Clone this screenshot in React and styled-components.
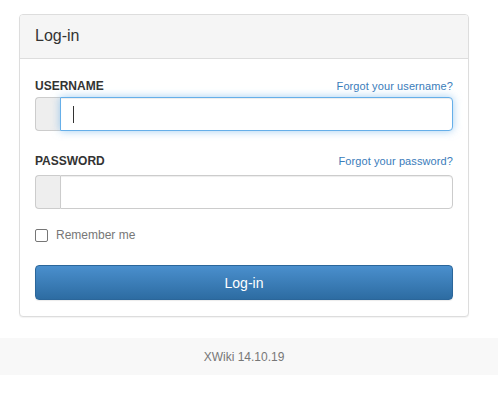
import styled, { createGlobalStyle } from 'styled-components';

const GlobalStyle = createGlobalStyle`
  html, body {
    margin: 0;
    padding: 0;
    background: #fff;
    font-family: "Liberation Sans", Arial, sans-serif;
    color: #333;
  }
`;

const Page = styled.div`
  padding-top: 14px;
`;

const Main = styled.div`
  padding: 0 29px 21px 19px;
`;

const Panel = styled.div`
  border: 1px solid #ddd;
  border-radius: 4px;
  background: #fff;
  box-shadow: 0 1px 1px rgba(0, 0, 0, 0.05);
`;

const PanelHeading = styled.div`
  background: #f5f5f5;
  border-bottom: 1px solid #ddd;
  border-radius: 3px 3px 0 0;
  padding: 9px 15px 11px;
  height: 23px;
`;

const PanelTitle = styled.h2`
  margin: 0;
  font-size: 16px;
  line-height: 23px;
  font-weight: 400;
  color: #333;
`;

const PanelBody = styled.div`
  padding: 19px 15px 16px 15px;
`;

const FieldGroup = styled.div`
  margin-bottom: ${p => p.$gap}px;
`;

const LabelRow = styled.div`
  display: flex;
  justify-content: space-between;
  align-items: baseline;
  margin-bottom: ${p => p.$gap}px;
`;

const Label = styled.label`
  font-size: 12px;
  line-height: 17px;
  font-weight: 700;
  text-transform: uppercase;
  color: #333;
`;

const HelpLink = styled.a`
  font-size: 11px;
  letter-spacing: 0.1px;
  color: #3a7cba;
  text-decoration: none;
`;

const InputGroup = styled.div`
  display: flex;
  height: 34px;
`;

const Addon = styled.span`
  width: 24px;
  flex: none;
  background: #eee;
  border: 1px solid #ccc;
  border-right: none;
  border-radius: 4px 0 0 4px;
`;

const TextBox = styled.div`
  flex: 1;
  display: flex;
  align-items: center;
  padding: 0 12px;
  background: #fff;
  border: 1px solid ${p => (p.$focused ? '#66afe9' : '#ccc')};
  border-radius: 0 4px 4px 0;
  box-shadow: ${p =>
    p.$focused
      ? 'inset 0 1px 1px rgba(0,0,0,.075), 0 0 8px rgba(102,175,233,.6)'
      : 'inset 0 1px 1px rgba(0,0,0,.075)'};
`;

const Caret = styled.span`
  display: block;
  width: 1px;
  height: 17px;
  background: #333;
`;

const CheckRow = styled.label`
  display: flex;
  align-items: center;
  gap: 8px;
  font-size: 12px;
  line-height: 17px;
  color: #777;
  margin-bottom: 21px;
`;

const CheckBox = styled.span`
  width: 11px;
  height: 11px;
  border: 1px solid #767676;
  border-radius: 2px;
  background: #fff;
`;

const SubmitButton = styled.button`
  display: block;
  width: 100%;
  height: 35px;
  border: 1px solid #2b669a;
  border-radius: 4px;
  background: linear-gradient(to bottom, #4a8fcd 0%, #2d6ca2 100%);
  box-shadow: 0 1px 1px rgba(0, 0, 0, 0.08);
  color: #fff;
  font-family: inherit;
  font-size: 14px;
  padding: 0;
`;

const Footer = styled.footer`
  background: #f8f8f8;
  height: 37px;
  display: flex;
  align-items: center;
  justify-content: center;
  padding-right: 10px;
  font-size: 12px;
  color: #777;
`;

function Field({ label, link, focused, labelGap, gap }) {
  return (
    <FieldGroup $gap={gap}>
      <LabelRow $gap={labelGap}>
        <Label>{label}</Label>
        <HelpLink href="#">{link}</HelpLink>
      </LabelRow>
      <InputGroup>
        <Addon />
        <TextBox $focused={focused}>{focused && <Caret />}</TextBox>
      </InputGroup>
    </FieldGroup>
  );
}

export default function App() {
  return (
    <>
      <GlobalStyle />
      <Page>
        <Main>
          <Panel>
            <PanelHeading>
              <PanelTitle>Log-in</PanelTitle>
            </PanelHeading>
            <PanelBody>
              <Field label="Username" link="Forgot your username?" focused labelGap={2} gap={22} />
              <Field label="Password" link="Forgot your password?" labelGap={5} gap={18} />
              <CheckRow>
                <CheckBox />
                Remember me
              </CheckRow>
              <SubmitButton>Log-in</SubmitButton>
            </PanelBody>
          </Panel>
        </Main>
        <Footer>XWiki 14.10.19</Footer>
      </Page>
    </>
  );
}
